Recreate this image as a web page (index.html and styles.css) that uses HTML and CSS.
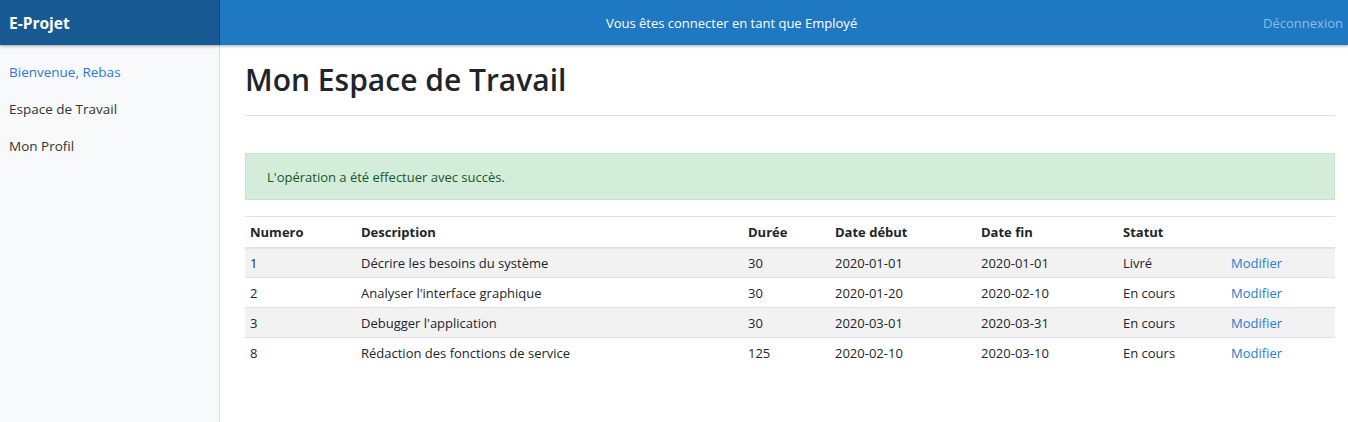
FILE: index.html
```html
<!DOCTYPE html>
<html lang="fr">
<head>
<meta charset="utf-8">
<title>E-Projet</title>
<link rel="stylesheet" href="styles.css">
</head>
<body>
<header class="topbar">
  <a class="brand" href="#">E-Projet</a>
  <div class="status">Vous êtes connecter en tant que Employé</div>
  <a class="logout" href="#">Déconnexion</a>
</header>
<div class="layout">
  <nav class="sidebar">
    <a class="side-link active" href="#">Bienvenue, Rebas</a>
    <a class="side-link" href="#">Espace de Travail</a>
    <a class="side-link" href="#">Mon Profil</a>
  </nav>
  <main class="main">
    <h1 class="title">Mon Espace de Travail</h1>
    <div class="alert">L'opération a été effectuer avec succès.</div>
    <table class="tasks">
      <colgroup>
        <col class="c-num"><col class="c-desc"><col class="c-dur"><col class="c-deb"><col class="c-fin"><col class="c-stat"><col class="c-act">
      </colgroup>
      <thead>
        <tr><th>Numero</th><th>Description</th><th>Durée</th><th>Date début</th><th>Date fin</th><th>Statut</th><th></th></tr>
      </thead>
      <tbody>
        <tr><td>1</td><td>Décrire les besoins du système</td><td>30</td><td>2020-01-01</td><td>2020-01-01</td><td>Livré</td><td><a href="#">Modifier</a></td></tr>
        <tr><td>2</td><td>Analyser l'interface graphique</td><td>30</td><td>2020-01-20</td><td>2020-02-10</td><td>En cours</td><td><a href="#">Modifier</a></td></tr>
        <tr><td>3</td><td>Debugger l'application</td><td>30</td><td>2020-03-01</td><td>2020-03-31</td><td>En cours</td><td><a href="#">Modifier</a></td></tr>
        <tr><td>8</td><td>Rédaction des fonctions de service</td><td>125</td><td>2020-02-10</td><td>2020-03-10</td><td>En cours</td><td><a href="#">Modifier</a></td></tr>
      </tbody>
    </table>
  </main>
</div>
</body>
</html>
```
FILE: styles.css
```css
* { box-sizing: border-box; }
html, body { margin: 0; height: 100%; }
body {
  font-family: "Open Sans", "Noto Sans", "Liberation Sans", sans-serif;
  font-size: 13px;
  color: #212529;
  background: #fff;
  overflow: hidden;
}
a { text-decoration: none; }

.topbar {
  display: flex;
  align-items: center;
  height: 45px;
  background: #1e78c2;
  box-shadow: 0 1px 3px rgba(0,0,0,.35);
  position: relative;
  z-index: 2;
}
.brand {
  width: 220px;
  height: 100%;
  display: flex;
  align-items: center;
  padding-left: 9px;
  background: #175a93;
  color: #fff;
  font-weight: 700;
  font-size: 15.5px;
  box-shadow: inset -1px 0 0 rgba(0,0,0,.25);
}
.status {
  flex: 1;
  text-align: center;
  color: #fff;
  font-size: 13px;
  padding-right: 8px;
}
.logout {
  color: #8fbde3;
  font-size: 13px;
  padding: 0 5px 0 12px;
}

.layout {
  display: flex;
  height: calc(100% - 45px);
}
.sidebar {
  width: 220px;
  flex: none;
  background: #f8f9fa;
  border-right: 1px solid #dfe2e5;
  display: flex;
  flex-direction: column;
  padding-top: 17px;
}
.side-link {
  display: block;
  padding: 0 9px;
  height: 37px;
  line-height: 20px;
  color: #333;
  font-size: 13.5px;
  font-weight: 500;
}
.side-link.active { color: #2a7ad6; }

.main {
  flex: 1;
  padding: 0 13px 0 25px;
}
.title {
  margin: 0;
  padding: 17px 0 17px;
  font-size: 30px;
  font-weight: 600;
  line-height: 36px;
  color: #212529;
  border-bottom: 1px solid #dee2e6;
}
.alert {
  margin-top: 37px;
  height: 47px;
  padding: 0 21px;
  display: flex;
  align-items: center;
  background: #d4edda;
  border: 1px solid #c3e6cb;
  color: #155724;
  font-size: 13px;
}
.tasks {
  margin-top: 16px;
  width: 100%;
  border-collapse: collapse;
  font-size: 13px;
  color: #212529;
}
.c-num { width: 111px; }
.c-desc { width: 387px; }
.c-dur { width: 87px; }
.c-deb { width: 146px; }
.c-fin { width: 142px; }
.c-stat { width: 108px; }
.tasks th {
  text-align: left;
  font-weight: 700;
  height: 31px;
  padding: 0 5px;
  border-top: 1px solid #dee2e6;
  border-bottom: 2px solid #dee2e6;
}
.tasks td {
  height: 30px;
  padding: 0 5px;
  border-top: 1px solid #dee2e6;
}
.tasks tbody tr:nth-child(odd) { background: #f2f2f2; }
.tasks td a { color: #2a7ad6; }
```
